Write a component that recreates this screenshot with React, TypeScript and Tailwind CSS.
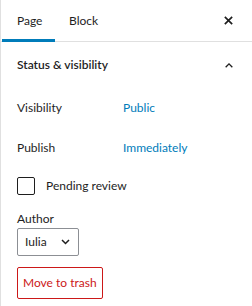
import React from "react";

export default function App() {
  return (
    <div
      className="w-[252px] h-[306px] bg-white border-l border-[#e0e0e0] text-[12px] text-[#1e1e1e] overflow-hidden"
      style={{ fontFamily: 'Lato, "Noto Sans", sans-serif' }}
    >
      {/* tabs */}
      <div className="flex items-stretch h-[42px] border-b border-[#e0e0e0]">
        <div className="relative flex items-center px-[16px] w-[54px]">
          Page
          <div className="absolute left-[1px] right-0 bottom-[-1px] h-[3px] bg-[#007cba]" />
        </div>
        <div className="flex items-center px-[14px]">Block</div>
        <div className="ml-auto flex items-center pr-[18px]">
          <svg width="11" height="11" viewBox="0 0 12 12">
            <path d="M2 2 L10 10 M10 2 L2 10" stroke="#1e1e1e" strokeWidth="1.8" />
          </svg>
        </div>
      </div>

      {/* section */}
      <div className="flex items-center justify-between h-[46px] pl-[16px] pr-[18px]">
        <span className="font-semibold">Status &amp; visibility</span>
        <svg width="10" height="7" viewBox="0 0 12 8">
          <path d="M2 6 L6 2 L10 6" fill="none" stroke="#1e1e1e" strokeWidth="1.6" />
        </svg>
      </div>

      <div className="px-[16px]">
        <div className="flex items-center h-[40px]">
          <span className="w-[106px]">Visibility</span>
          <span className="text-[#007cba]">Public</span>
        </div>
        <div className="flex items-center h-[40px]">
          <span className="w-[106px]">Publish</span>
          <span className="text-[#007cba]">Immediately</span>
        </div>
        <div className="flex items-center gap-[11px] mt-[9px]">
          <div className="w-[18px] h-[18px] border border-[#1e1e1e] rounded-[2px]" />
          <span>Pending review</span>
        </div>
        <div className="mt-[15px]">Author</div>
        <div className="flex items-center justify-between w-[62px] h-[28px] border border-[#8c8f94] rounded-[2px] pl-[7px] pr-[8px]">
          <span>Iulia</span>
          <svg width="9" height="6" viewBox="0 0 9 6">
            <path d="M1 1 L4.5 4.5 L8 1" fill="none" stroke="#1e1e1e" strokeWidth="1.5" />
          </svg>
        </div>
        <button className="mt-[11px] h-[32px] px-[5px] border border-[#cc1818] rounded-[2px] text-[#cc1818]">
          Move to trash
        </button>
      </div>
    </div>
  );
}
